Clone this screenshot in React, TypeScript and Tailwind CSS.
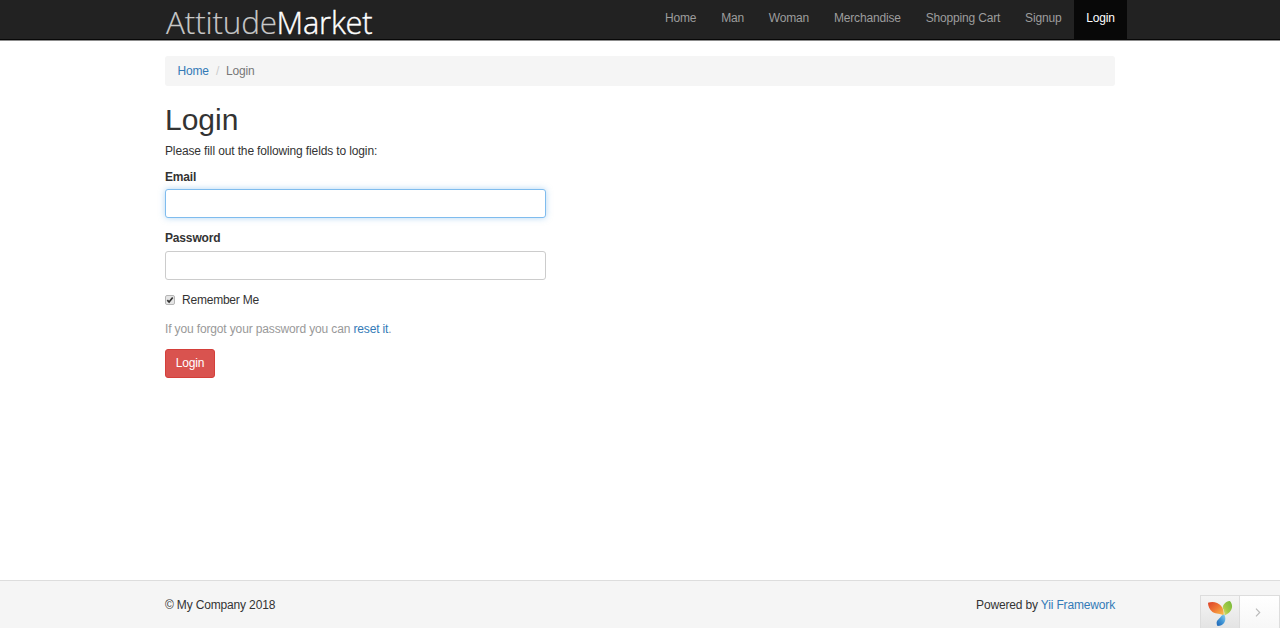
import React from "react";

const links = ["Home", "Man", "Woman", "Merchandise", "Shopping Cart", "Signup"];

function Logo() {
  return (
    <svg width="210" height="39" viewBox="0 0 210 39" className="block shrink-0 overflow-visible" role="img">
      <text x="1" y="33.800" textLength="111" lengthAdjust="spacingAndGlyphs" className="fill-[#c8c8c8] stroke-[#c8c8c8] stroke-[0.15px] font-['Open_Sans',sans-serif] text-[31px] font-light">
        Attitude
      </text>
      <text x="111.500" y="33.800" textLength="96" lengthAdjust="spacingAndGlyphs" className="fill-white stroke-white stroke-[0.4px] font-['Open_Sans',sans-serif] text-[31px] font-light">
        Market
      </text>
    </svg>
  );
}

function YiiMark() {
  return (
    <svg width="26" height="27" viewBox="0 0 26 27" className="block">
      <defs>
        <linearGradient id="leafRed" x1="0" y1="0" x2="1" y2="1">
          <stop offset="0" stopColor="#dc3f28" />
          <stop offset=".5" stopColor="#ef7834" />
          <stop offset="1" stopColor="#fbc64d" />
        </linearGradient>
        <linearGradient id="leafGreen" x1="1" y1="0" x2="0" y2="1">
          <stop offset="0" stopColor="#72b83c" />
          <stop offset=".6" stopColor="#a6ca45" />
          <stop offset="1" stopColor="#e4e37a" />
        </linearGradient>
        <linearGradient id="leafBlue" x1="1" y1="0" x2="0" y2="1">
          <stop offset="0" stopColor="#8bd2f2" />
          <stop offset=".5" stopColor="#3f94d5" />
          <stop offset="1" stopColor="#1d62b3" />
        </linearGradient>
      </defs>
      <path d="M1 2.800C5 1 11 2 14 5.700C16.500 8.500 17 12 16.700 15.500C13 12.800 9.500 14.800 5.500 12C2.500 9.700 1 6 1 2.800Z" fill="url(#leafRed)" />
      <path d="M22.800 1C26.500 4.500 26.300 12 17.500 15.500C17.500 12.500 17 10 15.700 8C15.800 4.500 18.500 1.500 22.800 1Z" fill="url(#leafGreen)" />
      <path d="M17.300 14.600C20 20 17.500 26 10.500 26C7.800 20.500 12.300 19.300 13.600 17C14.500 15.500 15.800 14.800 17.300 14.600Z" fill="url(#leafBlue)" />
    </svg>
  );
}

export default function App() {
  return (
    <div className="relative flex h-[628px] flex-col overflow-hidden bg-white font-['Liberation_Sans',Arial,sans-serif] text-[12px] leading-[17px] tracking-[-0.16px] text-[#333]">
      <header className="h-[40px] shrink-0 border-b border-[#080808] bg-[#222] shadow-[0_1px_0_#8c8c8c]">
        <div className="mx-auto flex h-[39px] w-[950px] justify-between">
          <Logo />
          <nav className="-mr-3 flex h-[39px]">
            {links.map((label) => (
              <a key={label} href="#" className="px-[12.4px] pt-[10px] text-[#9d9d9d]">
                {label}
              </a>
            ))}
            <a href="#" className="bg-[#080808] px-[12.3px] pt-[10px] text-white">
              Login
            </a>
          </nav>
        </div>
      </header>

      <main className="mx-auto w-[950px] grow pt-[16px]">
        <ol className="flex h-[30px] rounded-[3px] bg-[#f5f5f5] px-[12.5px] pt-[7px]">
          <li>
            <a href="#" className="text-[#337ab7]">Home</a>
          </li>
          <li className="px-[7px] text-[#ccc]">/</li>
          <li className="text-[#777]">Login</li>
        </ol>
        <h1 className="mt-[17px] text-[30px] leading-[33px] tracking-normal">Login</h1>
        <p className="mt-[7px] h-[17px] tracking-[-0.13px]">Please fill out the following fields to login:</p>
        <form className="w-[381px]">
          <label htmlFor="email" className="mt-[9px] block h-[17px] font-bold">Email</label>
          <input id="email" className="mt-[3px] block h-[29px] w-full rounded-[3px] border border-[#7fbcee] bg-white px-2.5 shadow-[0_0_6px_rgba(102,175,233,0.5)] outline-none" />
          <label htmlFor="password" className="mt-[12px] block h-[17px] font-bold">Password</label>
          <input id="password" type="password" className="mt-[4px] block h-[29px] w-full rounded-[3px] border border-[#ccc] bg-white px-2.5 outline-none" />
          <label className="mt-[12px] flex h-[17px] items-start tracking-[-0.22px]">
            <svg width="10" height="10" viewBox="0 0 10 10" className="mt-[3px] mr-[7px] shrink-0">
              <rect x=".5" y=".5" width="9" height="9" rx="1.500" fill="#e5e5e5" stroke="#b5b5b5" />
              <path d="M2.300 5.100 4.100 7 7.700 2.500" fill="none" stroke="#333" strokeWidth="1.700" />
            </svg>
            Remember Me
          </label>
          <p className="mt-[12px] h-[17px] tracking-[-0.14px] text-[#999]">
            If you forgot your password you can <a href="#" className="text-[#337ab7]">reset it</a>.
          </p>
          <button type="button" className="mt-[11px] flex h-[29px] w-[50px] justify-center rounded-[3px] border border-[#d43f3a] bg-[#d9534f] pt-[5px] text-white">
            Login
          </button>
        </form>
      </main>

      <footer className="h-[48px] shrink-0 border-t border-[#ddd] bg-[#f5f5f5]">
        <div className="mx-auto flex w-[950px] justify-between pt-[16px]">
          <p>© My Company 2018</p>
          <p>
            Powered by <a href="#" className="text-[#337ab7]">Yii Framework</a>
          </p>
        </div>
      </footer>

      <div className="absolute right-0 bottom-0 flex h-[33px] w-[80px] border-t border-l border-[#ddd]">
        <div className="flex w-[39px] items-start justify-center border-r border-[#ddd] bg-linear-to-b from-[#f5f5f5] to-[#e4e4e4] pt-[4px]">
          <YiiMark />
        </div>
        <div className="flex grow items-center justify-center border-r border-[#ddd] bg-linear-to-b from-white to-[#f7f7f7]">
          <svg width="6" height="9" viewBox="0 0 6 9" className="mr-[3px]">
            <path d="M1 .7 4.700 4.500 1 8.300" fill="none" stroke="#bbb" strokeWidth="1.200" />
          </svg>
        </div>
      </div>
    </div>
  );
}
